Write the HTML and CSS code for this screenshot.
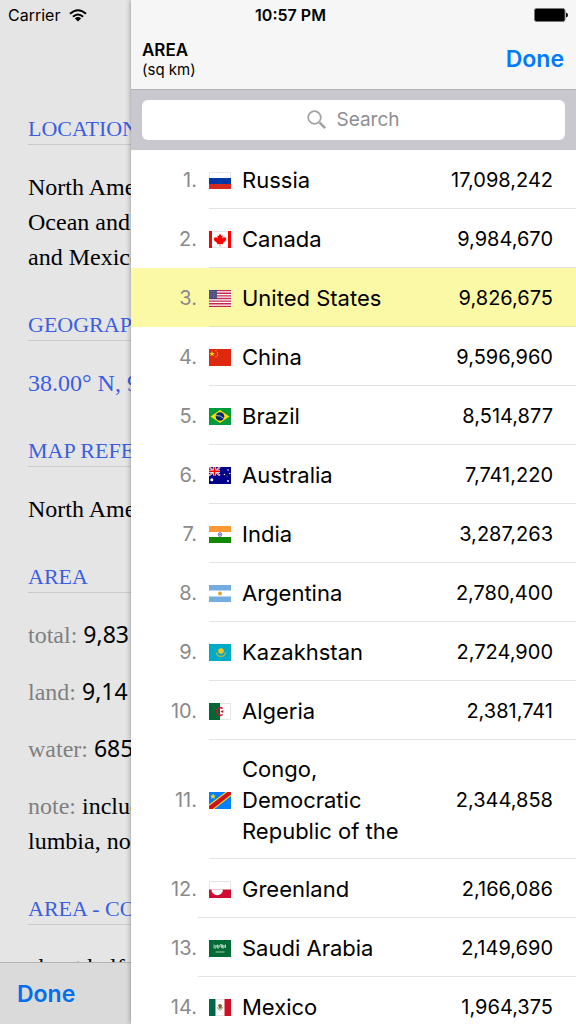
FILE: index.html
```html
<!DOCTYPE html>
<html lang="en">
<head>
<meta charset="utf-8">
<meta name="viewport" content="width=device-width, initial-scale=1">
<title>Area (sq km)</title>
<link rel="stylesheet" href="styles.css">
</head>
<body>
<div class="status">
  <div class="carrier">Carrier
    <svg class="wifi" viewBox="0 0 18 13" aria-hidden="true"><g fill="none" stroke="#000" stroke-width="2"><path d="M1 4.8Q9-2.400 17 4.800"/><path d="M3.900 7.800Q9 3.200 14.100 7.800"/></g><path d="M5.900 9.400Q9 6.700 12.100 9.400L9 12.600z"/></svg>
  </div>
  <div class="time">10:57 PM</div>
  <svg class="battery" viewBox="0 0 34 14" aria-hidden="true"><rect x=".5" y=".5" width="30.500" height="13" rx="2" fill="#000" stroke="#777"/><path d="M32 4.500q2 .5 2 2.500t-2 2.500z"/></svg>
</div>
<div class="screen">
  <main class="page">
    <article class="facts">
      <h2>LOCATION</h2>
      <p>North America<br>Ocean and<br>and Mexico</p>
      <h2>GEOGRAPHIC</h2>
      <p><a href="#map">38.00° N, 97.00° W</a></p>
      <h2>MAP REFERENCES</h2>
      <p>North America</p>
      <h2>AREA</h2>
      <p><span class="key">total:</span> <span class="num">9,83</span></p>
      <p><span class="key">land:</span> <span class="num">9,14</span></p>
      <p><span class="key">water:</span> <span class="num">685</span></p>
      <p><span class="key">note:</span> includes<br>lumbia, no</p>
      <h2>AREA - COMPARATIVE</h2>
      <p>about half</p>
    </article>
    <footer class="toolbar"><button class="action" type="button">Done</button></footer>
  </main>
  <section class="drawer">
    <header class="bar">
      <h1>AREA<small>(sq km)</small></h1>
      <button class="action" type="button">Done</button>
    </header>
    <div class="search">
      <label class="field">
        <svg class="lens" viewBox="0 0 20 20" aria-hidden="true"><g fill="none" stroke="#a3a3a8"><circle cx="7.500" cy="7.500" r="6.300" stroke-width="1.800"/><path d="M12.500 12.500l5.700 5.700" stroke-width="2.600"/></g></svg>
        <input type="text" placeholder="Search" aria-label="Search">
      </label>
    </div>
    <table class="ranking">
      <colgroup><col class="c-rank"><col class="c-flag"><col><col class="c-value"></colgroup>
      <tbody>
        <tr><td>1.</td><td><svg class="flag" viewBox="0 0 22 17"><path fill="#fff" d="M0 0h22v17H0z"/><path fill="#0039a6" d="M0 6h22v6H0z"/><path fill="#d52b1e" d="M0 12h22v5H0z"/><path fill="none" stroke="#e5e5e5" d="M.5 6V.5h21V6"/></svg></td><th scope="row">Russia</th><td>17,098,242</td></tr>
        <tr><td>2.</td><td><svg class="flag" viewBox="0 0 22 17"><path fill="#fff" d="M0 0h22v17H0z"/><path stroke="#e5e5e5" d="M3 .5h16M3 16.500h16"/><path fill="#f00" d="M0 0h3v17H0zM19 0h3v17h-3zM11 2.500l1.400 2.400 1.300-.5-.4 3 1.900-1.700.4 1.100 1.900-.2-.7 2 .7.500-3.700 3 .2 1.100-2.700-.3v2.600h-.6v-2.600l-2.700.3.2-1.100-3.700-3 .7-.5-.7-2 1.900.2.400-1.100 1.900 1.700-.4-3 1.300.5z"/></svg></td><th scope="row">Canada</th><td>9,984,670</td></tr>
        <tr class="current"><td>3.</td><td><svg class="flag" viewBox="0 0 22 17"><path fill="#fff" d="M0 0h22v17H0z"/><path stroke="#c4294b" stroke-width="1.300" d="M0 .65h22M0 3.270h22M0 5.880h22M0 8.500h22M0 11.120h22M0 13.730h22M0 16.350h22"/><path fill="#45457b" d="M0 0h8v9H0z"/><path stroke="#9a9abd" stroke-width=".7" stroke-dasharray=".8 .8" d="M.5 1.500h7M1 3.300h7M.5 5.100h7M1 6.900h7"/></svg></td><th scope="row">United States</th><td>9,826,675</td></tr>
        <tr><td>4.</td><td><svg class="flag" viewBox="0 0 22 17"><path fill="#de2910" d="M0 0h22v17H0z"/><path fill="#ffde00" d="M3 2l.7 1.900 2 .1-1.600 1.200.6 2L3 6.100 1.300 7.200l.6-2L.3 4l2-.1z"/><g fill="#ffb000"><circle cx="7" cy="1.800" r=".7"/><circle cx="8.500" cy="3.700" r=".7"/><circle cx="8.500" cy="6" r=".7"/><circle cx="7" cy="7.800" r=".7"/></g></svg></td><th scope="row">China</th><td>9,596,960</td></tr>
        <tr><td>5.</td><td><svg class="flag" viewBox="0 0 22 17"><path fill="#009b3a" d="M0 0h22v17H0z"/><path fill="#fedf00" d="M11 2l9.500 6.500L11 15 1.500 8.500z"/><circle cx="11" cy="8.500" r="4.300" fill="#002776"/><path fill="none" stroke="#cfe0d8" stroke-width=".8" d="M7 7.600q4.500-.6 7.800 2.800"/></svg></td><th scope="row">Brazil</th><td>8,514,877</td></tr>
        <tr><td>6.</td><td><svg class="flag" viewBox="0 0 22 17"><path fill="#00008b" d="M0 0h22v17H0z"/><path stroke="#fff" stroke-width="1.600" d="M0 0l11 8.500M11 0L0 8.500"/><path stroke="#f00" stroke-width=".6" d="M0 0l11 8.500M11 0L0 8.500"/><path stroke="#fff" stroke-width="3" d="M5.500 0v8.500M0 4.250h11"/><path stroke="#f00" stroke-width="1.700" d="M5.500 0v8.500M0 4.250h11"/><g fill="#fff"><circle cx="2.800" cy="12.800" r="1.500"/><circle cx="15.400" cy="7.500" r=".8"/><circle cx="19" cy="3" r=".8"/><circle cx="20.800" cy="6.500" r=".7"/><circle cx="19" cy="14" r=".9"/><circle cx="18" cy="9" r=".4"/></g></svg></td><th scope="row">Australia</th><td>7,741,220</td></tr>
        <tr><td>7.</td><td><svg class="flag" viewBox="0 0 22 17"><path fill="#fff" d="M0 0h22v17H0z"/><path fill="#f93" d="M0 0h22v6H0z"/><path fill="#128807" d="M0 11h22v6H0z"/><circle cx="11" cy="8.500" r="1.900" fill="#ccccec" stroke="#6d6dbb" stroke-width=".8"/><circle cx="11" cy="8.500" r=".7" fill="#4545a0"/></svg></td><th scope="row">India</th><td>3,287,263</td></tr>
        <tr><td>8.</td><td><svg class="flag" viewBox="0 0 22 17"><path fill="#fff" d="M0 0h22v17H0z"/><path fill="#74acdf" d="M0 0h22v5.500H0zM0 11.500h22V17H0z"/><circle cx="11" cy="8.500" r="1.900" fill="#e0a030"/></svg></td><th scope="row">Argentina</th><td>2,780,400</td></tr>
        <tr><td>9.</td><td><svg class="flag" viewBox="0 0 22 17"><path fill="#00abc9" d="M0 0h22v17H0z"/><circle cx="12" cy="7" r="2.800" fill="#f5c518"/><path fill="none" stroke="#a8b94a" stroke-width="1.300" d="M7.300 8.500q1 4 4.700 4t4.700-4"/></svg></td><th scope="row">Kazakhstan</th><td>2,724,900</td></tr>
        <tr><td>10.</td><td><svg class="flag" viewBox="0 0 22 17"><path fill="#fff" d="M0 0h22v17H0z"/><path fill="none" stroke="#e5e5e5" d="M11 .5h10.500v16H11"/><path fill="#063" d="M0 0h11v17H0z"/><path fill="none" stroke="#d21034" stroke-width="1.500" d="M13.700 5.500a3.700 3.700 0 1 0 0 6"/><path fill="#d21034" d="M11.300 8.500l3-1.600v3.200z"/></svg></td><th scope="row">Algeria</th><td>2,381,741</td></tr>
        <tr><td>11.</td><td><svg class="flag" viewBox="0 0 22 17"><path fill="#007fff" d="M0 0h22v17H0z"/><path fill="#f7d618" d="M0 12.500L16.500 0H22v4L5.500 17H0z"/><path fill="#ce1021" d="M0 14L18.500 0H22v2.500L3.500 17H0z"/><path fill="#f7d618" d="M4 1.500l.8 2 2.100.1-1.600 1.300.6 2.100L4 5.800 2.100 7l.6-2.100L1.100 3.600l2.100-.1z"/></svg></td><th scope="row">Congo, Democratic Republic of the</th><td>2,344,858</td></tr>
        <tr class="outset"><td>12.</td><td><svg class="flag" viewBox="0 0 22 17"><path fill="#fff" d="M0 0h22v17H0z"/><path fill="none" stroke="#e5e5e5" d="M.5 9V.5h21V9"/><path fill="#d00c33" d="M0 8.500h22V17H0z"/><path fill="#fff" d="M2.500 8.500h11.500a5.750 5.750 0 0 1-11.500 0z"/></svg></td><th scope="row">Greenland</th><td>2,166,086</td></tr>
        <tr class="outset"><td>13.</td><td><svg class="flag" viewBox="0 0 22 17"><path fill="#006c35" d="M0 0h22v17H0z"/><path fill="none" stroke="#b5d3c3" stroke-width=".9" d="M5 4.500v3.500h2V5m1.500-.5V8H10V5m1-.5h1.500V8m1-3.500V8H15V5m1.500-.5V8M5.500 6h11M6.500 12h9"/></svg></td><th scope="row">Saudi Arabia</th><td>2,149,690</td></tr>
        <tr class="outset"><td>14.</td><td><svg class="flag" viewBox="0 0 22 17"><path fill="#fff" d="M0 0h22v17H0z"/><path stroke="#e5e5e5" d="M7 .5h9M7 16.500h9"/><path fill="#006847" d="M0 0h6.500v17H0z"/><path fill="#ce1126" d="M15.500 0H22v17h-6.500z"/><path fill="none" stroke="#9aa56a" d="M8.500 8q.5 3.200 2.500 3.200T13.500 8"/><path fill="#8a5a30" d="M9 6l2-1.200 2 1.500-.5 3-2 .7z"/></svg></td><th scope="row">Mexico</th><td>1,964,375</td></tr>
      </tbody>
    </table>
  </section>
</div>
</body>
</html>
```
FILE: styles.css
```css
* { box-sizing: border-box; }

body {
  margin: 0;
  height: 100vh;
  overflow: hidden;
  background: #e5e5e5;
  color: #000;
  font-family: Inter, "Liberation Sans", sans-serif;
}

button, input { font: inherit; border: 0; padding: 0; background: none; }

/* Status bar floats over both panes */
.status {
  position: absolute;
  z-index: 2;
  top: 0;
  left: 0;
  right: 0;
  height: 30px;
  padding: 0 8px;
  display: grid;
  grid-template-columns: 1fr auto 1fr;
  align-items: center;
  font-size: 16px;
  line-height: 30px;
}
.carrier { display: flex; align-items: center; gap: 9px; }
.wifi { width: 18px; height: 13px; }
.time { padding-left: 5px; font-weight: 600; }
.battery { width: 34px; height: 14px; justify-self: end; }

.screen { display: flex; height: 100%; }

/* Fact sheet behind the drawer */
.page {
  flex: 0 0 131px;
  min-width: 0;
  display: flex;
  flex-direction: column;
}
.facts {
  flex: 1;
  min-height: 0;
  overflow: hidden;
  padding: 79px 0 0 28px;
  font-family: "Liberation Serif", serif;
  font-size: 24px;
  line-height: 35px;
  white-space: nowrap;
}
.facts h2 {
  margin: 34px 0 25px;
  border-bottom: 1px solid #cbcbcb;
  color: #3b5fe0;
  font-size: 22px;
  font-weight: 400;
  line-height: 31px;
}
.facts p { margin: 0; }
.facts p + p { margin-top: 22px; }
.facts a { color: #3b5fe0; text-decoration: none; }
.key { color: #808080; }
.num { font-family: "Noto Sans", sans-serif; font-size: 23px; line-height: 24px; }

.toolbar {
  flex: 0 0 62px;
  display: flex;
  align-items: center;
  padding-left: 17px;
  border-top: 1px solid #b4b4b4;
  background: #dadada;
}
.action { color: #007aff; font-size: 23px; font-weight: 600; line-height: 32px; }
.toolbar .action { color: #0070eb; }

/* Ranking drawer */
.drawer {
  flex: 1;
  min-width: 0;
  position: relative;
  background: #fff;
  box-shadow: 0 0 5px rgba(0, 0, 0, .4);
}
.bar {
  height: 90px;
  display: flex;
  justify-content: space-between;
  align-items: center;
  padding: 28px 12px 0 11px;
  border-bottom: 1px solid #b2b2b2;
  background: #f6f6f6;
}
.bar h1 { margin: 0; padding-top: 2px; font-size: 17px; font-weight: 600; line-height: 20px; }
.bar small { display: block; font-size: 15px; font-weight: 400; }

.search { padding: 10px 11px; background: #c9c8ce; height: 60px; }
.field {
  height: 40px;
  display: flex;
  justify-content: center;
  align-items: center;
  gap: 10px;
  border-radius: 6px;
  background: #fff;
}
.lens { width: 20px; height: 20px; }
.field input { width: 64px; font-size: 19px; line-height: 24px; outline: 0; }
.field input::placeholder { color: #8e8e93; opacity: 1; }

.ranking {
  width: 100%;
  table-layout: fixed;
  border-collapse: separate;
  border-spacing: 0;
  font-size: 22px;
  line-height: 31px;
}
.c-rank { width: 78px; }
.c-flag { width: 33px; }
.c-value { width: 155px; }
.ranking td, .ranking th {
  height: 59px;
  padding: 14px 0 11px;
  border-bottom: 1px solid #e3e3e5;
  font-weight: 400;
  text-align: left;
  vertical-align: middle;
}
.ranking td:first-child {
  padding-right: 12px;
  border-bottom-color: transparent;
  color: #8a8a8a;
  font-size: 20px;
  text-align: right;
}
.ranking td:last-child { padding-right: 23px; font-size: 20px; text-align: right; }
.ranking .outset td:first-child {
  background: linear-gradient(#e3e3e5, #e3e3e5) right bottom / 11px 1px no-repeat border-box;
}
.current { background: #fcf9a6; }
.current td, .current th { border-bottom-color: #e6e3a5; }
.flag { display: block; width: 22px; height: 17px; }
```
